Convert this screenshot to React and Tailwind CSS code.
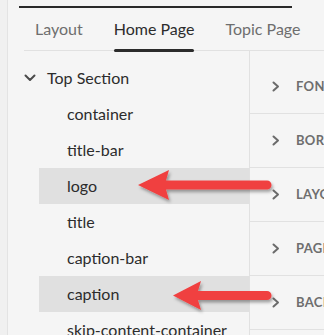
import React from "react";

const font = { fontFamily: "Lato, 'Open Sans', sans-serif" };

function ChevronDown() {
  return (
    <svg width="12" height="8" viewBox="0 0 12 8" className="shrink-0">
      <path d="M1.5 1.5 L6 6 L10.5 1.5" fill="none" stroke="#4b4b4b" strokeWidth="2" strokeLinecap="round" strokeLinejoin="round" />
    </svg>
  );
}

function ChevronRight() {
  return (
    <svg width="8" height="11" viewBox="0 0 8 11" className="shrink-0">
      <path d="M1.5 1.5 L6 5.5 L1.5 9.5" fill="none" stroke="#6b6b6b" strokeWidth="2" strokeLinecap="round" strokeLinejoin="round" />
    </svg>
  );
}

const items = ["container", "title-bar", "logo", "title", "caption-bar", "caption", "skip-content-container"];
const highlighted = ["logo", "caption"];
const sections = ["FONT", "BORDER", "LAYOUT", "PAGE", "BACKGROUND"];

export default function App() {
  return (
    <div className="relative w-[324px] h-[335px] overflow-hidden bg-[#f5f5f5] flex" style={font}>
      <div className="w-[8px] shrink-0 bg-[#f0f0f0] border-r border-[#e3e3e3]" />
      <div className="flex-1 flex flex-col min-w-0">
        <div className="h-[6px] shrink-0" />
        <div className="ml-[11px] w-[273px] h-[2px] bg-[#2a2a2a] shrink-0" />
        <div className="ml-[16px] h-[43px] shrink-0 border-b border-[#e1e1e1] flex items-end pl-[11px] gap-[31px] text-[16px] whitespace-nowrap">
          <div className="h-full flex items-center text-[#6e6e6e]">Layout</div>
          <div className="h-full relative flex items-center text-[#2c2c2c]">
            Home Page
            <div className="absolute left-0 right-0 bottom-[-2px] h-[3px] rounded-full bg-[#2c2c2c]" />
          </div>
          <div className="h-full flex items-center text-[#6e6e6e]">Topic Page</div>
        </div>
        <div className="flex flex-1 min-h-0">
          <div className="w-[241px] shrink-0 pt-[9px] text-[16px] text-[#2c2c2c] whitespace-nowrap">
            <div className="h-[36px] flex items-center pl-[16px] gap-[11px]">
              <ChevronDown />
              <span>Top Section</span>
            </div>
            {items.map((it) => (
              <div
                key={it}
                className={
                  "h-[36px] ml-[31px] pl-[28px] flex items-center " +
                  (highlighted.includes(it) ? "bg-[#e0e0e0]" : "")
                }
              >
                {it}
              </div>
            ))}
          </div>
          <div className="flex-1 min-w-0 border-l border-[#e1e1e1] pt-[9px] whitespace-nowrap overflow-hidden">
            {sections.map((s) => (
              <div key={s} className="h-[54px] border-b border-[#e1e1e1] flex items-center pl-[22px] gap-[16px]">
                <ChevronRight />
                <span className="shrink-0 text-[13px] font-bold text-[#6e6e6e] tracking-[0.3px]">{s}</span>
              </div>
            ))}
          </div>
        </div>
      </div>
      <svg className="absolute inset-0 pointer-events-none" width="324" height="335" viewBox="0 0 324 335">
        <defs>
          <filter id="sh" x="-10%" y="-30%" width="130%" height="180%">
            <feDropShadow dx="1.5" dy="2.5" stdDeviation="1.5" floodColor="#000" floodOpacity="0.35" />
          </filter>
        </defs>
        <path d="M138 185 L169 170 L166 180.5 L267 180.5 A4.5 4.5 0 0 1 267 189.5 L166 189.5 L169 200 Z" fill="#f04040" filter="url(#sh)" />
        <path d="M173 295.5 L201 281 L198 291 L267 291 A4.5 4.5 0 0 1 267 300 L198 300 L201 310 Z" fill="#f04040" filter="url(#sh)" />
      </svg>
    </div>
  );
}
